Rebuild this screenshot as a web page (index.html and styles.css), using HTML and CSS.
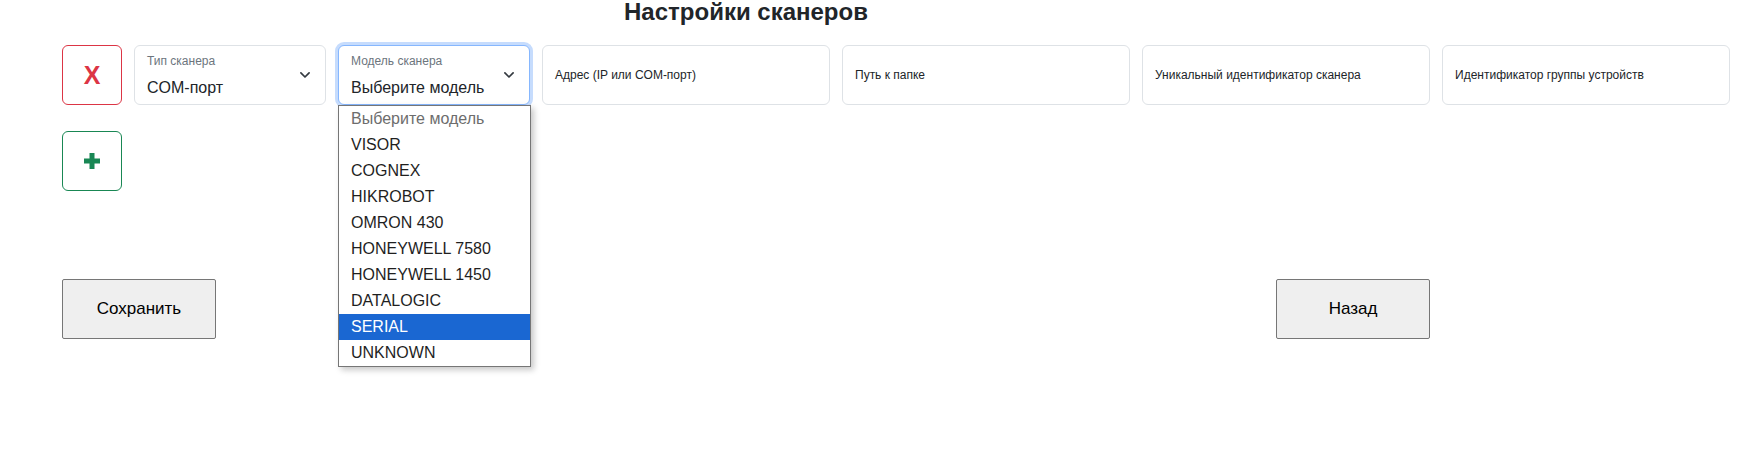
FILE: index.html
```html
<!DOCTYPE html>
<html lang="ru">
<head>
<meta charset="utf-8">
<title>Настройки сканеров</title>
<link rel="stylesheet" href="styles.css">
</head>
<body>
<div class="page">
  <h1 class="title">Настройки сканеров</h1>
  <div class="scanner-row">
    <button class="btn-remove" type="button">X</button>
    <div class="field select">
      <span class="field-label">Тип сканера</span>
      <span class="field-value">COM-порт</span>
      <svg class="chevron" width="10" height="6" viewBox="0 0 10 6"><path d="M0.9 0.9 L5 5 L9.1 0.9" fill="none" stroke="#343a40" stroke-width="1.7" stroke-linecap="round" stroke-linejoin="round"/></svg>
    </div>
    <div class="field select focused">
      <span class="field-label">Модель сканера</span>
      <span class="field-value">Выберите модель</span>
      <svg class="chevron" width="10" height="6" viewBox="0 0 10 6"><path d="M0.9 0.9 L5 5 L9.1 0.9" fill="none" stroke="#343a40" stroke-width="1.7" stroke-linecap="round" stroke-linejoin="round"/></svg>
      <ul class="dropdown">
        <li class="opt disabled">Выберите модель</li>
        <li class="opt">VISOR</li>
        <li class="opt">COGNEX</li>
        <li class="opt">HIKROBOT</li>
        <li class="opt">OMRON 430</li>
        <li class="opt">HONEYWELL 7580</li>
        <li class="opt">HONEYWELL 1450</li>
        <li class="opt">DATALOGIC</li>
        <li class="opt active">SERIAL</li>
        <li class="opt">UNKNOWN</li>
      </ul>
    </div>
    <div class="field input"><span class="input-label">Адрес (IP или COM-порт)</span></div>
    <div class="field input"><span class="input-label">Путь к папке</span></div>
    <div class="field input"><span class="input-label">Уникальный идентификатор сканера</span></div>
    <div class="field input"><span class="input-label">Идентификатор группы устройств</span></div>
  </div>
  <button class="btn-add" type="button" aria-label="Добавить">
    <svg width="16" height="16" viewBox="0 0 16 16"><rect x="0" y="5.5" width="16" height="5" fill="#198754"/><rect x="5.5" y="0" width="5" height="16" fill="#198754"/></svg>
  </button>
  <div class="actions">
    <button class="btn-plain" type="button">Сохранить</button>
    <button class="btn-plain" type="button">Назад</button>
  </div>
</div>
</body>
</html>
```
FILE: styles.css
```css
* { box-sizing: border-box; }
html, body { margin: 0; padding: 0; background: #fff; }
body {
  min-height: 474px;
  font-family: "Liberation Sans", Arial, sans-serif;
  color: #212529;
}
.page {
  padding-left: 62px;
  min-height: 474px;
}
.title {
  width: 1368px;
  margin: 0;
  font-size: 24px;
  line-height: 24px;
  font-weight: bold;
  text-align: center;
  color: #212529;
}
.scanner-row {
  margin-top: 21px;
  display: flex;
  gap: 12px;
  align-items: stretch;
}
.btn-remove, .btn-add {
  flex: none;
  width: 60px;
  height: 60px;
  background: #fff;
  border-radius: 6px;
  font-family: "Liberation Sans", Arial, sans-serif;
  font-weight: bold;
  padding: 0;
  display: flex;
  align-items: center;
  justify-content: center;
}
.btn-remove {
  border: 1px solid #dc3545;
  color: #dc3545;
  font-size: 25px;
  line-height: 1;
}
.btn-add {
  margin-top: 26px;
  border: 1px solid #198754;
}
.field {
  height: 60px;
  border: 1px solid #dee2e6;
  border-radius: 6px;
  background: #fff;
  position: relative;
  flex: none;
}
.select {
  width: 192px;
  display: flex;
  flex-direction: column;
  padding: 8px 12px 0 12px;
}
.select.focused {
  border-color: #86b7fe;
  box-shadow: 0 0 0 3px #c6dcfd;
}
.field-label {
  font-size: 12px;
  line-height: 14px;
  color: #6c757d;
  white-space: nowrap;
}
.field-value {
  margin-top: 9.5px;
  font-size: 16px;
  line-height: 20px;
  color: #212529;
  white-space: nowrap;
}
.chevron {
  position: absolute;
  right: 15px;
  top: 26px;
  overflow: visible;
}
.input {
  width: 288px;
  padding: 19px 12px 0 12px;
}
.input-label {
  font-size: 12px;
  line-height: 14px;
  color: #212529;
  white-space: nowrap;
}
.dropdown {
  position: absolute;
  left: -1px;
  top: 59px;
  width: 193px;
  margin: 0;
  padding: 0;
  list-style: none;
  background: #fff;
  border: 1px solid #767676;
  box-shadow: 3px 3px 6px rgba(0, 0, 0, 0.22);
  z-index: 10;
}
.opt {
  height: 26px;
  line-height: 26px;
  padding-left: 12px;
  font-size: 16px;
  color: #1f1f1f;
  white-space: nowrap;
}
.opt.disabled { color: #6d6d6d; }
.opt.active { background: #1a67d2; color: #fff; }
.actions {
  width: 1368px;
  margin-top: 88px;
  display: flex;
  justify-content: space-between;
}
.btn-plain {
  width: 154px;
  height: 60px;
  background: #efefef;
  border: 1px solid #767676;
  border-radius: 2px;
  font-family: "Liberation Sans", Arial, sans-serif;
  font-size: 17px;
  color: #000;
  padding: 0;
}
```
